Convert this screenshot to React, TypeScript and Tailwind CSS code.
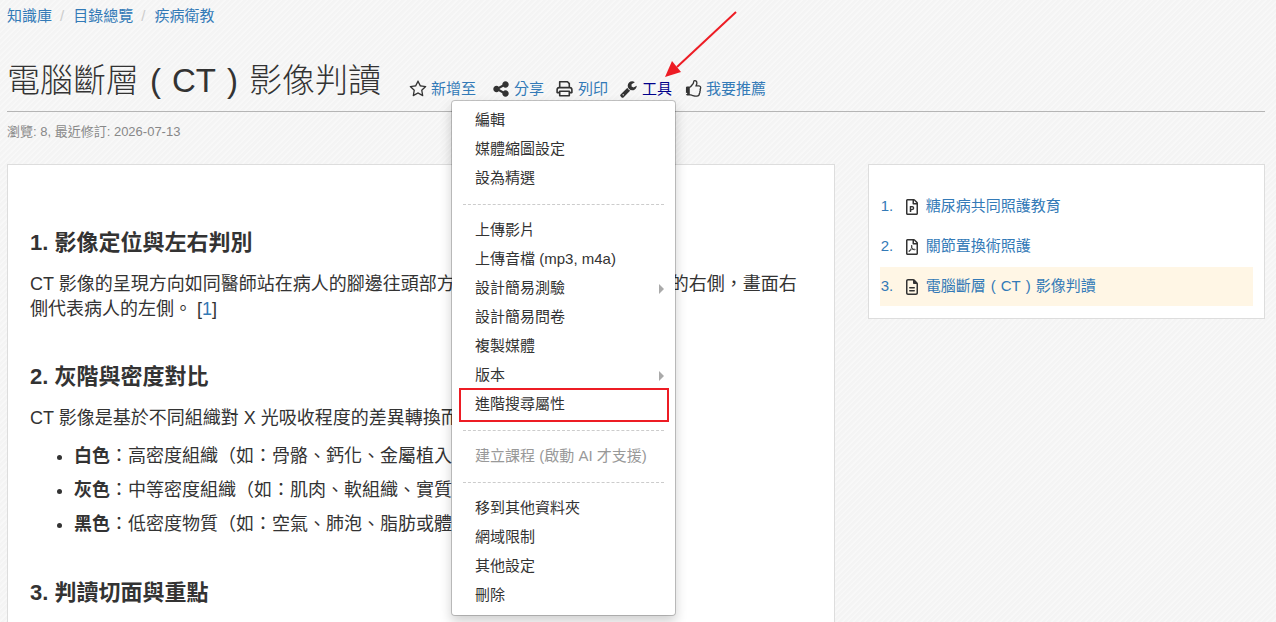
import type { ReactNode } from 'react'
import { FaRegFilePdf, FaRegFilePowerpoint } from 'react-icons/fa'
import { FaRegFileLines } from 'react-icons/fa6'

const ICONS = {
  star: 'M1201 1004l306-297-422-62-189-382-189 382-422 62 306 297-73 421 378-199 377 199zm527-357q0 22-26 48l-363 354 86 500q1 7 1 20 0 50-41 50-19 0-40-12l-449-236-449 236q-22 12-40 12-21 0-31.5-14.5t-10.5-35.5q0-6 2-20l86-500-364-354q-25-27-25-48 0-37 56-46l502-73 225-455q19-41 49-41t49 41l225 455 502 73q56 9 56 46z',
  share: 'M1344 1024q133 0 226.5 93.5t93.5 226.5-93.5 226.5-226.5 93.5-226.5-93.5-93.5-226.5q0-12 2-34l-360-180q-92 86-218 86-133 0-226.5-93.5t-93.5-226.5 93.5-226.5 226.5-93.5q126 0 218 86l360-180q-2-22-2-34 0-133 93.5-226.5t226.5-93.5 226.5 93.5 93.5 226.5-93.5 226.5-226.5 93.5q-126 0-218-86l-360 180q2 22 2 34t-2 34l360 180q92-86 218-86z',
  wrench: 'M384 1472q0-26-19-45t-45-19-45 19-19 45 19 45 45 19 45-19 19-45zm644-420l-682 682q-37 37-90 37-52 0-91-37l-106-108q-38-36-38-90 0-53 38-91l681-681q39 98 114.5 173.5t173.5 114.5zm634-435q0 39-23 106-47 134-164.5 217.5t-258.5 83.5q-185 0-316.5-131.5t-131.5-316.5 131.5-316.5 316.5-131.5q58 0 121.5 16.5t107.5 46.5q16 11 16 28t-16 28l-293 169v224l193 107q5-3 79-48.5t135.5-81 70.5-35.5q15 0 23.5 10t8.5 25z',
  thumb: 'M320 1344q0-26-19-45t-45-19q-27 0-45.5 19t-18.5 45q0 27 18.5 45.5t45.5 18.5q26 0 45-18.5t19-45.5zm1280-576q0-51-39-89.5t-89-38.5h-352q0-58 48-159.5t48-160.5q0-98-32-145t-128-47q-26 26-38 85t-30.5 125.5-59.5 109.5q-22 23-77 91-4 5-23 30t-31.5 41-34.5 42.5-40 44-38.5 35.5-40 27-35.5 9h-32v640h32q13 0 31.5 3t33 6.5 38 11 35 11.5 35.5 12.5 29 10.5q211 73 342 73h121q192 0 192-167 0-26-5-56 30-16 47.5-52.5t17.5-73.5-18-69q53-50 53-119 0-25-10-55.5t-25-47.5q32-1 53.5-47t21.5-81zm128-1q0 89-49 163 9 33 9 69 0 77-38 144 3 21 3 43 0 101-60 178 1 139-85 219.5t-227 80.5h-129q-96 0-189.5-22.5t-216.5-65.5q-116-40-138-40h-288q-53 0-90.5-37.5t-37.5-90.5v-640q0-53 37.5-90.5t90.5-37.5h274q36-24 137-155 58-75 107-128 24-25 35.5-85.5t30.5-126.5 62-108q39-37 90-37 84 0 151 32.5t102 101.5 35 186q0 93-48 192h176q104 0 180 76t76 179z',
}

function Icon({ name }: { name: keyof typeof ICONS | 'print' }) {
  if (name === 'print') {
    return (
      <svg viewBox="0 0 18 18" className="size-[18px] shrink-0 fill-none stroke-[#333]" strokeWidth="1.6" strokeLinejoin="round" aria-hidden="true">
        <path d="M3.7 7.6V1.8h7.8l1.8 1.8V7.6" />
        <path d="M3.5 12.6H1.1V9.8Q1.1 7.6 3.3 7.6h10.4q2.2 0 2.2 2.2V12.6H13.5" />
        <path d="M3.7 11.2h9.6v4.6H3.7z" />
      </svg>
    )
  }
  return (
    <svg viewBox="0 0 1792 1792" className="size-[18px] shrink-0 fill-[#333]" aria-hidden="true">
      <path d={ICONS[name]} />
    </svg>
  )
}

const MENU: { label: string; sub?: boolean; marked?: boolean; disabled?: boolean }[][] = [
  [{ label: '編輯' }, { label: '媒體縮圖設定' }, { label: '設為精選' }],
  [
    { label: '上傳影片' },
    { label: '上傳音檔 (mp3, m4a)' },
    { label: '設計簡易測驗', sub: true },
    { label: '設計簡易問卷' },
    { label: '複製媒體' },
    { label: '版本', sub: true },
    { label: '進階搜尋屬性', marked: true },
  ],
  [{ label: '建立課程 (啟動 AI 才支援)', disabled: true }],
  [{ label: '移到其他資料夾' }, { label: '網域限制' }, { label: '其他設定' }, { label: '刪除' }],
]

function ToolsMenu() {
  return (
    <div className="absolute top-full -right-1 z-10 w-[225px] rounded border border-black/20 bg-white bg-clip-padding px-[11px] py-[5px] shadow-[0_6px_12px_rgba(0,0,0,0.18)]">
      {MENU.map((group, i) => (
        <ul key={i} className={i > 0 ? 'mt-[11px] border-t border-dashed border-[#ccc] pt-[11px]' : ''}>
          {group.map((item) => (
            <li key={item.label} className="relative">
              <button
                type="button"
                disabled={item.disabled}
                className="flex h-[29px] w-full items-center justify-between pl-3 text-left text-[15px] text-[#333] disabled:text-[#999]"
              >
                {item.label}
                {item.sub && <span className="border-y-[5px] border-l-[5px] border-y-transparent border-l-[#aaa]" />}
              </button>
              {item.marked && (
                <span className="pointer-events-none absolute -top-0.5 -right-[5px] -bottom-[3px] -left-1 border-2 border-[#ed1c24]" />
              )}
            </li>
          ))}
        </ul>
      ))}
    </div>
  )
}

function Tool({ icon, label, active, children }: { icon: keyof typeof ICONS | 'print'; label: string; active?: boolean; children?: ReactNode }) {
  return (
    <li className="relative first:mr-1">
      <a href="#" className={`flex h-[22px] items-center gap-1 text-[15px] ${active ? 'text-[#00008b]' : 'text-[#337ab7]'}`}>
        <Icon name={icon} />
        {label}
      </a>
      {children}
    </li>
  )
}

// brackets sit in the middle of a full-width cell
function PageTitle() {
  return (
    <span>
      電腦斷層
      <span className="inline-block w-[1em] text-center">(</span>
      CT
      <span className="inline-block w-[1em] text-center">)</span>
      影像判讀
    </span>
  )
}

const LESSONS = [
  { title: '糖尿病共同照護教育', icon: FaRegFilePowerpoint },
  { title: '關節置換術照護', icon: FaRegFilePdf },
  { title: <PageTitle />, icon: FaRegFileLines, current: true },
]

const COLORS = [
  { name: '白色', text: '：高密度組織（如：骨骼、鈣化、金屬植入物）。' },
  { name: '灰色', text: '：中等密度組織（如：肌肉、軟組織、實質器官）。' },
  { name: '黑色', text: '：低密度物質（如：空氣、肺泡、脂肪或體液）。' },
]

export default function App() {
  return (
    <div
      lang="zh-Hant"
      className="relative h-screen overflow-hidden bg-[#f6f6f6] bg-[repeating-linear-gradient(135deg,#f4f4f4_0px,#f4f4f4_2px,#f8f8f8_3px,#f8f8f8_4px)] pr-[11px] pl-[7px] font-['Liberation_Sans','Noto_Sans_CJK_TC',sans-serif] text-[15px] text-[#333]"
    >
      <nav className="flex h-8 items-center text-[#337ab7]">
        <a href="#">知識庫</a>
        <span className="pr-[9px] pl-2 text-[#ccc]">/</span>
        <a href="#">目錄總覽</a>
        <span className="pr-[9px] pl-2 text-[#ccc]">/</span>
        <a href="#">疾病衛教</a>
      </nav>

      <header className="mt-[26px] flex h-[54px] items-start border-b border-[#b5b5b5]">
        <h1 className="text-[33px] leading-[46px] font-light">
          <PageTitle />
        </h1>
        <ul className="mt-5 ml-7 flex gap-3">
          <Tool icon="star" label="新增至" />
          <Tool icon="share" label="分享" />
          <Tool icon="print" label="列印" />
          <Tool icon="wrench" label="工具" active>
            <ToolsMenu />
          </Tool>
          <Tool icon="thumb" label="我要推薦" />
        </ul>
      </header>
      <p className="mt-[9px] text-[13px] leading-[22px] text-[#888]">瀏覽: 8, 最近修訂: 2026-07-13</p>

      <div className="mt-[21px] flex items-start gap-[33px]">
        <main className="h-screen min-w-0 flex-[829] border border-[#ddd] bg-white px-[22px] pt-[62px] text-[18px] leading-[25px]">
          <h2 className="text-[22px] leading-8 font-bold">1. 影像定位與左右判別</h2>
          <p className="mt-[13px]">
            CT 影像的呈現方向如同醫師站在病人的腳邊往頭部方向看，故畫面左側代表病人的右側，畫面右側代表病人的左側。 [
            <a href="#" className="text-[#337ab7]">1</a>]
          </p>
          <h2 className="mt-[39px] text-[22px] leading-8 font-bold">2. 灰階與密度對比</h2>
          <p className="mt-[13px]">CT 影像是基於不同組織對 X 光吸收程度的差異轉換而成。</p>
          <ul className="mt-2 list-disc pl-11 leading-[34px]">
            {COLORS.map((c) => (
              <li key={c.name}>
                <b>{c.name}</b>
                {c.text}
              </li>
            ))}
          </ul>
          <h2 className="mt-9 text-[22px] leading-8 font-bold">3. 判讀切面與重點</h2>
        </main>

        <aside className="min-w-0 flex-[396] border border-[#ddd] bg-white px-[11px] pt-[22px] pb-3">
          <ol className="flex flex-col gap-px">
            {LESSONS.map(({ title, icon: FileIcon, current }, i) => (
              <li key={i} className={current ? 'bg-[#fff6e5]' : ''}>
                <a href="#" className="flex h-[39px] items-center text-[#337ab7]">
                  <span className="w-[26px] pl-px">{i + 1}.</span>
                  <FileIcon className="mr-2 h-4 w-3 text-[#333]" />
                  {title}
                </a>
              </li>
            ))}
          </ol>
        </aside>
      </div>

      <svg className="pointer-events-none absolute top-0 left-[660px] z-20" width="90" height="90" aria-hidden="true">
        <path d="M76 12L17 67" stroke="#ed1c24" strokeWidth="2" />
        <path d="M5 77L12 61L21 72Z" fill="#ed1c24" />
      </svg>
    </div>
  )
}
